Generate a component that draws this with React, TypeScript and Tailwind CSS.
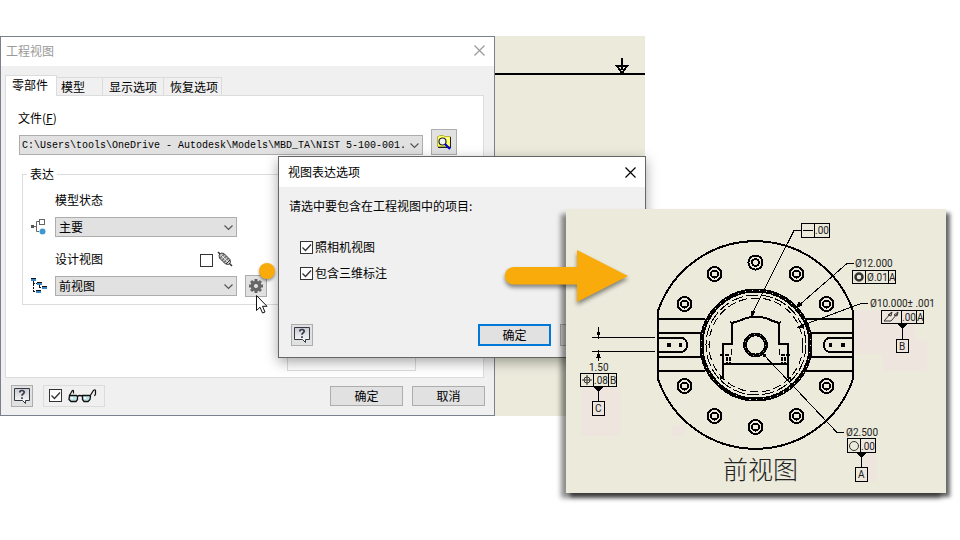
/**
 * 工程视图 - 视图表达选项说明图
 *
 * 左侧: 工程视图对话框
 * 中间: 视图表达选项对话框
 * 右侧: 生成的前视图
 */
import { useState, type ReactNode } from 'react'

const BOLTS = [
    [755.5, 262.5],
    [714.5, 274],
    [796.5, 274],
    [684.5, 304],
    [826.5, 304],
    [684.5, 386],
    [826.5, 386],
    [714.5, 416],
    [796.5, 416],
    [755.5, 427],
]

const GEAR_TEETH = [0, 45, 90, 135, 180, 225, 270, 315]

const TABS = [
    { label: '模型', className: 'w-[46px] pl-1' },
    { label: '显示选项', className: 'w-[61px] pl-[6px]' },
    { label: '恢复选项', className: 'w-[58px] pl-[6px]' },
]

/* ---------- 图标 ---------- */

function CloseIcon() {
    return (
        <svg width="11" height="11" viewBox="0 0 11 11" stroke="currentColor" fill="none">
            <path d="M.5.5l10 10M10.5.5l-10 10" strokeWidth="1.200" />
        </svg>
    )
}

function HelpIcon() {
    return (
        <svg width="18" height="18" viewBox="0 0 18 18" fill="none">
            <defs>
                <linearGradient id="helpFill" x1="0" y1="0" x2="0" y2="1">
                    <stop offset="0" stopColor="#c8cad2" />
                    <stop offset="1" stopColor="#ffffff" />
                </linearGradient>
            </defs>
            <path d="M1.500 1.500h15v12h-4v3l-3-3h-8z" fill="url(#helpFill)" stroke="#333844" />
            <path d="M6.800 5.500q0-2 2.200-2t2.200 1.800q0 1-1.200 1.800-1 .6-1 1.700M9 10.300v1.700" stroke="#333844" strokeWidth="1.700" />
        </svg>
    )
}

function GearIcon() {
    return (
        <svg width="16" height="16" viewBox="-8 -8 16 16">
            {GEAR_TEETH.map(a => (
                <rect key={a} x="-1.500" y="-7" width="3" height="4" fill="#666" transform={`rotate(${a})`} />
            ))}
            <circle r="3.700" fill="none" stroke="#666" strokeWidth="3.200" />
        </svg>
    )
}

function BrowseIcon() {
    return (
        <svg width="16" height="16" viewBox="0 0 16 16">
            <path d="M1.500 12.500v-10h1l1-1h4l1 1h6v10z" fill="#ffff66" stroke="#b5b53a" />
            <path d="M14.500 3v10M2 13.500h13" stroke="#222" fill="none" />
            <path d="M3 4h10v1H3z" fill="#fffde0" />
            <circle cx="6.500" cy="7.500" r="3.500" fill="#eef6f6" stroke="#222" strokeWidth="1.200" />
            <path d="M9 10l5 5" stroke="#0000d8" strokeWidth="2.200" />
        </svg>
    )
}

function ModelStateIcon() {
    return (
        <svg width="16" height="16" viewBox="0 0 16 16" fill="none" stroke="#666">
            <rect x="0" y="6" width="3" height="3" fill="#555" stroke="none" />
            <path d="M3 7.500h3M9 2.500H5.500v10H8" />
            <rect x="8.500" y=".5" width="5" height="5" fill="#fff" />
            <circle cx="11.500" cy="12.500" r="3" fill="#3f97d0" stroke="none" />
        </svg>
    )
}

function TreeIcon() {
    return (
        <svg width="16" height="16" viewBox="0 0 16 16" shapeRendering="crispEdges">
            <path d="M2.500 3v11M2 5.500h5M2 13.500h4M8.500 7v3M8 9.500h4" stroke="#111" fill="none" strokeDasharray="2 1" />
            {[[0, 0], [6, 4], [11, 8], [5, 12]].map(([x, y]) => (
                <g key={x}>
                    <rect x={x} y={y} width="5" height="3" fill="#3a86cf" />
                    <path d={`M${x} ${y + 0.5}h5`} stroke="#111" />
                </g>
            ))}
        </svg>
    )
}

function LinkIcon() {
    return (
        <svg width="16" height="16" viewBox="0 0 16 16" fill="none" stroke="#333">
            <path d="M1 1l3 3M12 12l3 3" strokeWidth="1.500" />
            <path d="M2.500 7l-.5-3 2-2 3 .5 6 6 .5 3-2 2-3-.5z" fill="#bbb" strokeWidth=".9" />
            <path d="M3 7.500l4.500-4.500M5 9.500L9.500 5M7 11.500L11.500 7M9 13l4-4" />
            <path d="M4.500 4.500l7 7" stroke="#fff" strokeWidth=".8" />
        </svg>
    )
}

function GlassesIcon() {
    return (
        <svg width="29" height="14" viewBox="0 0 29 14" fill="none" stroke="#111">
            <path d="M1.500 6.500h7l1 1v3l-1.500 2h-5l-2-2zM14.500 6.500h7l1 1-.5 3-2 2h-4l-1.500-2z" fill="#bfe3ea" strokeWidth="1.300" />
            <path d="M3 8h2v2H3zM16 8h2v2h-2z" fill="#fff" stroke="none" />
            <path d="M9.500 7q2-1 5 0" strokeWidth="1.500" />
            <path d="M1.500 6.500l2.500-4.500q1.500-1.500 1.500.5v2M22 7l3.500-5.500q1.500-1.500 2 0v3.500l-1 2" strokeWidth="1.200" />
        </svg>
    )
}

/* ---------- 控件 ---------- */

interface SelectProps {
    id: string
    value: string
    className?: string
    textClass?: string
}

function Select({ id, value, className = '', textClass = 'pl-[3px] text-[12px]' }: SelectProps) {
    return (
        <div className={`relative h-5 ${className}`}>
            <select
                id={id}
                className={`block h-5 w-full appearance-none border border-[#adadad] bg-[#e1e1e1] pr-4 leading-[18px] ${textClass}`}
            >
                <option>{value}</option>
            </select>
            <svg className="pointer-events-none absolute top-2 right-1" width="9" height="6" viewBox="0 0 9 6" fill="none" stroke="#555">
                <path d="M.5.5l4 4 4-4" strokeWidth="1.200" />
            </svg>
        </div>
    )
}

interface CheckProps {
    id: string
    checked?: boolean
    label?: string
}

function Check({ id, checked = false, label }: CheckProps) {
    const [on, setOn] = useState(checked)
    return (
        <span className="relative block size-[13px] shrink-0">
            <input
                id={id}
                type="checkbox"
                aria-label={label}
                checked={on}
                onChange={e => setOn(e.target.checked)}
                className="block size-[13px] appearance-none border border-[#333] bg-white"
            />
            {on && (
                <svg className="pointer-events-none absolute inset-0" width="13" height="13" viewBox="0 0 13 13" fill="none" stroke="#333">
                    <path d="M2.500 6.500l3 3 5.500-6" strokeWidth="1.300" />
                </svg>
            )}
        </span>
    )
}

function IconButton({ label, className, children }: { label: string; className: string; children: ReactNode }) {
    return (
        <button
            type="button"
            aria-label={label}
            className={`flex shrink-0 items-center justify-center border border-[#adadad] bg-[#e1e1e1] ${className}`}
        >
            {children}
        </button>
    )
}

/* ---------- 工程视图对话框 ---------- */

function DrawingViewDialog() {
    return (
        <section className="absolute top-9 left-0 w-[495px] border border-[#7a808c] bg-[#f0f0f0]">
            <header className="flex h-[29px] items-center justify-between bg-white pr-[9px] pb-[2px] pl-[5px] text-[#999]">
                <h1 className="leading-4">工程视图</h1>
                <button type="button" aria-label="关闭">
                    <CloseIcon />
                </button>
            </header>

            <div className="pt-[9px] pr-[10px] pl-1">
                <div role="tablist" className="relative -mb-px flex items-end">
                    <button type="button" role="tab" aria-selected className="h-[21px] w-[52px] border border-b-0 border-[#dcdcdc] bg-white pb-[2px] pl-[6px] text-left leading-4">
                        零部件
                    </button>
                    {TABS.map(tab => (
                        <button
                            key={tab.label}
                            type="button"
                            role="tab"
                            className={`h-[19px] border border-l-0 border-[#dcdcdc] text-left leading-4 ${tab.className}`}
                        >
                            {tab.label}
                        </button>
                    ))}
                </div>

                <div className="h-[283px] border border-[#dcdcdc] bg-white pt-[14px] pr-[13px] pl-3">
                    <label htmlFor="file" className="block leading-4">
                        文件(<u>F</u>)
                    </label>
                    <div className="mt-[3px] mr-[13px] ml-px flex items-end gap-2">
                        <Select
                            id="file"
                            value="C:\Users\tools\OneDrive - Autodesk\Models\MBD_TA\NIST 5-100-001."
                            className="flex-1"
                            textClass="pt-px pl-[2px] text-[10px] font-['Liberation_Mono',monospace]"
                        />
                        <IconButton label="浏览" className="size-[26px]">
                            <BrowseIcon />
                        </IconButton>
                    </div>

                    <fieldset className="mt-[11px] ml-1 border border-[#dcdcdc] pb-[7px] pl-2">
                        <legend className="-ml-1 px-[3px] leading-4">表达</legend>
                        <label htmlFor="state" className="mt-[10px] ml-6 block leading-4">
                            模型状态
                        </label>
                        <div className="mt-[9px] flex items-center gap-2">
                            <ModelStateIcon />
                            <Select id="state" value="主要" className="w-[182px]" />
                        </div>
                        <div className="mt-[14px] ml-6 flex w-[182px] items-end">
                            <label htmlFor="design" className="flex-1 leading-4">
                                设计视图
                            </label>
                            <Check id="associative" label="关联" />
                            <span className="mx-1">
                                <LinkIcon />
                            </span>
                        </div>
                        <div className="mt-[8px] flex items-center gap-2">
                            <TreeIcon />
                            <Select id="design" value="前视图" className="w-[182px]" />
                            <IconButton label="视图表达选项" className="size-[22px]">
                                <GearIcon />
                            </IconButton>
                        </div>
                    </fieldset>
                    <div className="mt-[7px] ml-[269px] h-[59px] w-[129px] border border-[#dcdcdc]" />
                </div>
            </div>

            <footer className="flex h-[37px] items-center gap-[9px] pr-[9px] pb-[2px] pl-[10px]">
                <IconButton label="帮助" className="size-[22px]">
                    <HelpIcon />
                </IconButton>
                <div className="mr-auto ml-px flex h-[22px] w-[62px] items-center gap-[6px] border border-[#dcdcdc] pl-[5px]">
                    <Check id="preview" label="预览" checked />
                    <GlassesIcon />
                </div>
                <button type="button" className="h-5 w-[73px] border border-[#adadad] bg-[#e1e1e1] leading-4">
                    确定
                </button>
                <button type="button" className="h-5 w-[73px] border border-[#adadad] bg-[#e1e1e1] leading-4">
                    取消
                </button>
            </footer>
        </section>
    )
}

/* ---------- 视图表达选项对话框 ---------- */

function OptionsDialog() {
    return (
        <section className="absolute top-[156px] left-[278px] w-[368px] border border-[#666] bg-[#f0f0f0] shadow-[0_4px_12px_rgba(0,0,0,0.35)]">
            <header className="flex h-[30px] items-center justify-between bg-white pr-[9px] pl-[9px]">
                <h2 className="leading-4">视图表达选项</h2>
                <button type="button" aria-label="关闭">
                    <CloseIcon />
                </button>
            </header>
            <div className="pt-[11px] pl-[10px]">
                <p className="leading-4">请选中要包含在工程视图中的项目:</p>
                <div className="mt-[25px] ml-[11px] flex flex-col gap-[10px]">
                    <div className="flex items-center gap-[2px]">
                        <Check id="camera" checked />
                        <label htmlFor="camera" className="leading-4">照相机视图</label>
                    </div>
                    <div className="flex items-center gap-[2px]">
                        <Check id="annotations" checked />
                        <label htmlFor="annotations" className="leading-4">包含三维标注</label>
                    </div>
                </div>
            </div>
            <footer className="mt-[43px] mb-[11px] flex items-center gap-[9px] pr-3 pl-3">
                <IconButton label="帮助" className="mr-auto size-[22px]">
                    <HelpIcon />
                </IconButton>
                <button type="button" className="h-[22px] w-[73px] border-2 border-[#0078d7] bg-[#e1e1e1] leading-4">
                    确定
                </button>
                <button type="button" className="h-[22px] w-[73px] border border-[#adadad] bg-[#e1e1e1] leading-4">
                    取消
                </button>
            </footer>
        </section>
    )
}

/* ---------- 前视图 ---------- */

function FrontView() {
    return (
        <figure className="absolute top-[209px] left-[566px] bg-[#ebeadb] shadow-[-5px_5px_5px_rgba(0,0,0,0.45),4px_4px_4px_rgba(0,0,0,0.6)]">
            <svg
                width="380"
                height="284"
                viewBox="566 209 380 284"
                fill="none"
                stroke="#000"
                className="block font-['Roboto','Noto_Sans_CJK_SC',sans-serif]"
            >
                <g fill="#efe5df" stroke="none">
                    <path d="M581 386h40v50h-40zM672 425h13v11h-13zM854 310h61v44h-61zM883 340h44v31h-44zM861 440h16v42h-16z" />
                </g>

                <g shapeRendering="crispEdges">
                    {/* 外轮廓 */}
                    <path d="M658 311A103 103 0 0 1 853 311V379A103 103 0 0 1 658 379Z" strokeWidth="2" />
                    {BOLTS.map(([x, y]) => (
                        <g key={`${x}-${y}`}>
                            <circle cx={x} cy={y} r="7" strokeWidth="2" />
                            <circle cx={x} cy={y} r="3.500" strokeWidth="2" />
                        </g>
                    ))}
                    <path d="M658 319h47M658 333h43M658 357h43M658 371h47M853 319h-47M853 333h-43M853 357h-43M853 371h-47" strokeWidth="2" />
                    <path d="M658 338h24q5 1 5 7t-5 7h-24M853 338h-24q-5 1-5 7t5 7h24" strokeWidth="2" />
                    <path d="M667 343h4v4h-4zM679 343h3v4h-3zM829 343h3v4h-3zM841 343h4v4h-4z" fill="#000" stroke="none" />

                    {/* 中心圆环 */}
                    <circle cx="756" cy="345" r="54.500" strokeWidth="4" />
                    <circle cx="756" cy="345" r="54.500" stroke="#ebeadb" strokeWidth="1" strokeDasharray="1 6" />
                    <circle cx="756" cy="345" r="50" strokeDasharray="12 3" />
                    <circle cx="756" cy="345" r="47" strokeDasharray="8 4" />
                    <circle cx="755.500" cy="345" r="10.500" strokeWidth="3.600" />
                    <circle cx="755.500" cy="345" r="10.500" stroke="#ebeadb" strokeWidth=".7" strokeDasharray="1 5" />

                    {/* 中心凸台 */}
                    <path d="M730 322l2 1q8-2 14-5 10-2 20 0 6 3 13 5l2-1M732 323v21h-9v33l-3 2M779 323v21h9v33l3 2M723 364h65" strokeWidth="2" />
                    <path d="M720 355h10M781 355h10M727 357v6M730 357v6M782 357v6M785 357v6" strokeWidth="2" strokeDasharray="4 1" />
                    <path d="M731 349v6M779 349v6" />

                    {/* 引线 */}
                    <path d="M801 230.500h-7L751 316M854 263.500h-7L797 307M868 303.500h-7L798 327M844 432.500h-7L762 353" />
                    <path d="M751 317l1-6 3 1zM796 308l3-6 3 3zM797 328l6-4 1 3zM761 352l5 3-2 2z" fill="#000" />
                    <path d="M592 337.500h63M592 351.500h63M598.500 327v10M598.500 352v9" />
                    <path d="M597 332h3l-1.500 5zM597 357h3l-1.500-5z" fill="#000" />

                    {/* 公差框 */}
                    <path d="M801.500 223.500h28v14h-28zM814.500 223.500v14M803 230.500h10" />
                    <path d="M852.500 270.500h43v13h-43zM865.500 270.500v13M888.500 270.500v13" />
                    <path d="M881.500 310.500h42v13h-42zM901.500 310.500v13M916.500 310.500v13" />
                    <path d="M580.500 373.500h36v13h-36zM593.500 373.500v13M608.500 373.500v13" />
                    <path d="M847.500 438.500h28v14h-28zM860.500 438.500v14" />
                    <path d="M896.500 339.500h12v13h-12zM592.500 401.500h12v14h-12zM855.500 467.500h12v14h-12z" />
                    <path d="M902.500 324v15M598.500 387v14M861.500 453v14" />
                    <path d="M898 324h9l-4.500 4zM594 387h9l-4.500 4zM857 453h9l-4.500 4z" fill="#000" />
                </g>

                <g stroke="#333">
                    <circle cx="859" cy="277" r="3.500" strokeWidth="2.500" />
                    <circle cx="587" cy="380" r="3" />
                    <path d="M582 380h10M587 375v10" />
                    <circle cx="854" cy="446" r="4.500" />
                    <path d="M884 321h7l7-8M884 321l7-8M888 315l4-3-1 4zM894 315l4-3-1 4z" />
                </g>

                <g fill="#222" stroke="none" fontSize="10">
                    <text x="815" y="234">.00</text>
                    <text x="855" y="267">Ø12.000</text>
                    <text x="867" y="281">Ø.01</text>
                    <text x="889" y="281">A</text>
                    <text x="870" y="307">Ø10.000± .001</text>
                    <text x="902" y="321">.00</text>
                    <text x="917" y="321">A</text>
                    <text x="899" y="350">B</text>
                    <text x="589" y="371">1.50</text>
                    <text x="594" y="384">.08</text>
                    <text x="610" y="384">B</text>
                    <text x="595" y="412">C</text>
                    <text x="846" y="436">Ø2.500</text>
                    <text x="861" y="450">.00</text>
                    <text x="858" y="478">A</text>
                    <text x="723" y="479" fontSize="25" fontWeight="300">前视图</text>
                </g>
            </svg>
        </figure>
    )
}

/* ---------- 标记 ---------- */

function Marks() {
    return (
        <>
            <span className="absolute top-[263px] left-[259px] size-4 rounded-full bg-[#f8ab0b] shadow-[0_2px_3px_rgba(0,0,0,0.4)]" />
            <svg className="absolute top-[294px] left-[255px]" width="14" height="21" viewBox="0 0 14 21">
                <path d="M1.500 1.500v15l3.500-3.300 2.500 5.800 2.500-1-2.500-5.700h4.500z" fill="#fff" stroke="#111" />
            </svg>
            <svg
                className="absolute top-[249px] left-[504px] drop-shadow-[0_3px_2px_rgba(0,0,0,0.45)]"
                width="126"
                height="54"
                viewBox="0 0 126 54"
            >
                <path d="M9.500 18H73V1l51 26-51 26V35.500H9.500a8.750 8.750 0 0 1 0-17.500z" fill="#f8ab0b" />
            </svg>
        </>
    )
}

export default function App() {
    return (
        <main className="relative min-h-screen w-full overflow-hidden bg-white font-['Noto_Sans_CJK_SC',sans-serif] text-[12px] text-black">
            {/* 图纸背景 */}
            <div className="absolute top-9 left-[495px] h-[380px] w-[150px] bg-[#ebeadb]">
                <svg width="150" height="42" viewBox="0 0 150 42" fill="none" stroke="#000" shapeRendering="crispEdges">
                    <path d="M0 38h150M127 22v12" strokeWidth="2" />
                    <path d="M122 30h10l-5 7z" strokeWidth="2" />
                </svg>
            </div>
            <DrawingViewDialog />
            <OptionsDialog />
            <FrontView />
            <Marks />
        </main>
    )
}
